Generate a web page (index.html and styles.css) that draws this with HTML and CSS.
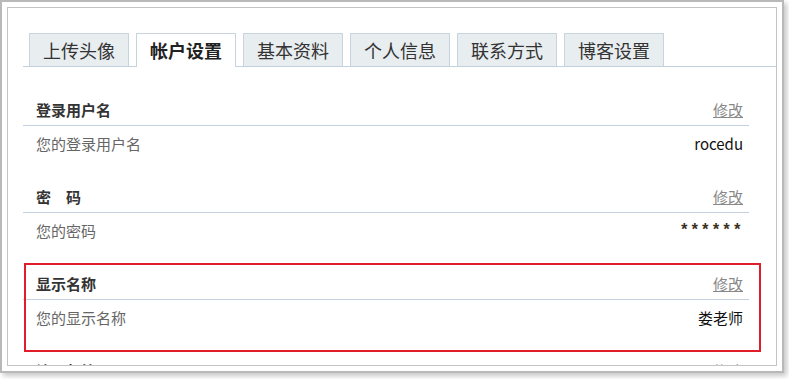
FILE: index.html
```html
<!DOCTYPE html>
<html lang="zh-CN">
<head>
<meta charset="utf-8">
<title>帐户设置</title>
<link rel="stylesheet" href="styles.css">
</head>
<body>
<div class="frame">
  <div class="panel">
    <div class="tabs">
      <div class="tab">上传头像</div>
      <div class="tab active">帐户设置</div>
      <div class="tab">基本资料</div>
      <div class="tab">个人信息</div>
      <div class="tab">联系方式</div>
      <div class="tab">博客设置</div>
    </div>
    <div class="sections">
      <div class="section">
        <div class="sec-head"><span class="title">登录用户名</span><a class="edit" href="#">修改</a></div>
        <div class="sec-row"><span class="label">您的登录用户名</span><span class="value">rocedu</span></div>
      </div>
      <div class="section">
        <div class="sec-head"><span class="title">密　码</span><a class="edit" href="#">修改</a></div>
        <div class="sec-row"><span class="label">您的密码</span><span class="value stars">******</span></div>
      </div>
      <div class="section highlight">
        <div class="sec-head"><span class="title">显示名称</span><a class="edit" href="#">修改</a></div>
        <div class="sec-row"><span class="label">您的显示名称</span><span class="value">娄老师</span></div>
      </div>
      <div class="section">
        <div class="sec-head"><span class="title">注册邮箱</span><a class="edit" href="#">修改</a></div>
        <div class="sec-row"><span class="label">您的注册邮箱</span><span class="value"></span></div>
      </div>
    </div>
  </div>
</div>
</body>
</html>
```

FILE: styles.css
```css
html, body {
  margin: 0;
  padding: 0;
  background: #ffffff;
}

body {
  font-family: "Microsoft YaHei", "Noto Sans CJK SC", sans-serif;
  width: 789px;
  height: 379px;
  overflow: hidden;
}

.frame {
  width: 770px;
  height: 359px;
  border: 2px solid #b9b9b9;
  padding: 5px;
  box-shadow: 3px 3px 5px rgba(0, 0, 0, 0.22);
  background: #fff;
}

.panel {
  box-sizing: border-box;
  height: 359px;
  border: 1px solid #c4c4c4;
  overflow: hidden;
  background: #fff;
}

.tabs {
  display: flex;
  gap: 7px;
  margin: 25px 0 0 15px;
  padding-left: 6px;
  border-bottom: 1px solid #c3d1de;
  align-items: flex-end;
}

.tab {
  height: 32px;
  line-height: 32px;
  padding: 0 13px;
  font-size: 18px;
  color: #333;
  background: #e8edf0;
  border: 1px solid #c8d4de;
  border-bottom: none;
}

.tab.active {
  background: #fff;
  font-weight: bold;
  color: #222;
  margin-bottom: -1px;
  height: 33px;
}

.sections {
  margin: 0 27px 0 15px;
}

.section {
  margin-top: 25px;
  position: relative;
}

.sec-head {
  display: flex;
  justify-content: space-between;
  padding: 8px 6px 5px 13px;
  line-height: 20px;
  border-bottom: 1px solid #c3d1e0;
}

.title {
  font-size: 15px;
  font-weight: bold;
  color: #333;
}

.edit {
  font-size: 15px;
  color: #888;
  text-decoration: underline;
}

.sec-row {
  display: flex;
  justify-content: space-between;
  padding: 8px 6px 0 13px;
  line-height: 20px;
}

.label {
  font-size: 15px;
  color: #666;
}

.value {
  font-size: 15px;
  color: #111;
}

.stars {
  color: #3a3020;
  letter-spacing: 1px;
  font-family: "Liberation Mono", monospace;
  font-size: 16px;
  font-weight: bold;
}

.highlight::after {
  content: "";
  position: absolute;
  left: 1px;
  right: -12px;
  top: -3px;
  bottom: -24px;
  border: 2px solid #e21d2a;
  pointer-events: none;
}
```
